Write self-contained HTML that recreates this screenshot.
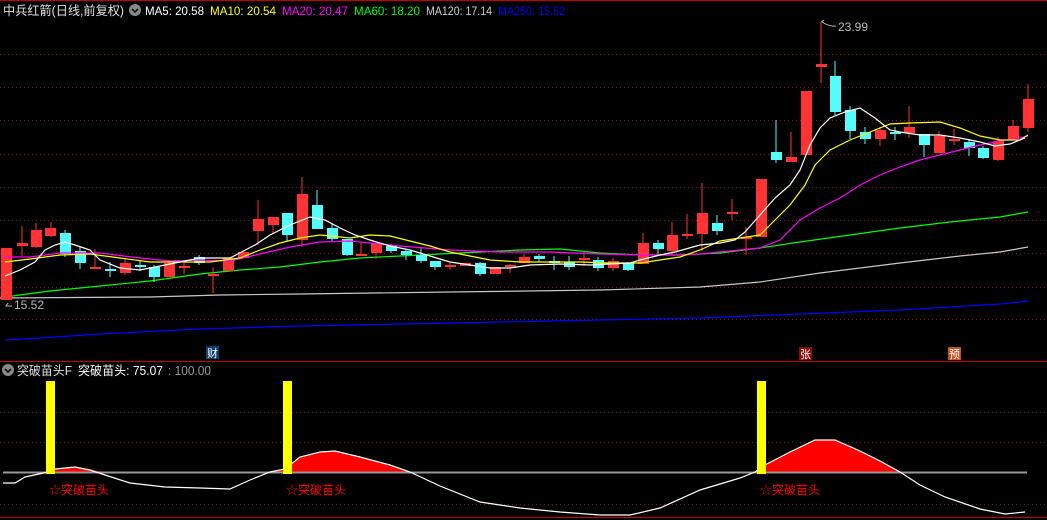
<!DOCTYPE html>
<html><head><meta charset="utf-8"><style>
html,body{margin:0;padding:0;background:#000;width:1047px;height:520px;overflow:hidden}
svg{display:block}
text{font-family:"Liberation Sans","Noto Sans CJK SC",sans-serif}
</style></head><body>
<svg width="1047" height="520" viewBox="0 0 1047 520" xmlns="http://www.w3.org/2000/svg">
<rect width="1047" height="520" fill="#000"/>
<line x1="0" y1="0.5" x2="1047" y2="0.5" stroke="#c00000"/>
<g stroke="#8a1010" stroke-dasharray="1,3">
<line x1="0" y1="54.5" x2="1047" y2="54.5"/><line x1="0" y1="87.5" x2="1047" y2="87.5"/>
<line x1="0" y1="120.5" x2="1047" y2="120.5"/><line x1="0" y1="154.5" x2="1047" y2="154.5"/>
<line x1="0" y1="187.5" x2="1047" y2="187.5"/><line x1="0" y1="220.5" x2="1047" y2="220.5"/>
<line x1="0" y1="253.5" x2="1047" y2="253.5"/><line x1="0" y1="287.5" x2="1047" y2="287.5"/>
<line x1="0" y1="319.5" x2="1047" y2="319.5"/>
<line x1="0" y1="412.5" x2="1047" y2="412.5"/><line x1="0" y1="442.5" x2="1047" y2="442.5"/>
<line x1="0" y1="504.5" x2="1047" y2="504.5"/>
</g>
<text x="3" y="15" font-size="12.5" fill="#e0e0e0" textLength="121" lengthAdjust="spacingAndGlyphs">中兵红箭(日线,前复权)</text>
<circle cx="135" cy="10" r="6" fill="#888"/><path d="M132 9 L135 12 L138 9" stroke="#000" stroke-width="1.5" fill="none"/>
<text x="145" y="15" font-size="12" fill="#fff" textLength="59" lengthAdjust="spacingAndGlyphs">MA5: 20.58</text>
<text x="210" y="15" font-size="12" fill="#ffff00" textLength="66" lengthAdjust="spacingAndGlyphs">MA10: 20.54</text>
<text x="282" y="15" font-size="12" fill="#ff00ff" textLength="66" lengthAdjust="spacingAndGlyphs">MA20: 20.47</text>
<text x="354" y="15" font-size="12" fill="#00ff00" textLength="66" lengthAdjust="spacingAndGlyphs">MA60: 18.20</text>
<text x="426" y="15" font-size="12" fill="#d0d0d0" textLength="66" lengthAdjust="spacingAndGlyphs">MA120: 17.14</text>
<text x="498" y="15" font-size="12" fill="#0000ff" textLength="67" lengthAdjust="spacingAndGlyphs">MA250: 15.52</text>

<g fill="none" stroke-width="1.2">
<polyline stroke="#0000ff" points="5,340 40,338 100,334 200,329 300,326 400,324 500,322 600,320 700,318 800,314 900,310 1000,304 1028,301"/>
<polyline stroke="#c8c8c8" points="0,298 150,297 220,295 300,294 450,292 600,290 700,287 760,282 820,273 900,263 960,256 1000,252 1028,247"/>
<polyline stroke="#00ff00" points="5,297 50,291 100,286 150,281 200,274 240,270 280,267 320,262 360,258 400,256 440,254 480,252 520,250 560,249 600,253 640,255 680,255 720,253 760,248 800,242 850,235 900,228 950,222 1000,217 1028,212"/>
</g>

<g id="c">
<g fill="#ff3333" stroke="#ff3333">
<rect x="1" y="248" width="11" height="52" stroke="none"/>
<line x1="22" y1="226" x2="22" y2="256"/><rect x="17" y="243" width="11" height="3" stroke="none"/>
<line x1="36" y1="223" x2="36" y2="248"/><rect x="31" y="230" width="11" height="17" stroke="none"/>
<line x1="51" y1="222" x2="51" y2="237"/><rect x="45" y="228" width="11" height="8" stroke="none"/>
<line x1="95" y1="249" x2="95" y2="269"/><rect x="90" y="267" width="11" height="2" stroke="none"/>
<line x1="125" y1="258" x2="125" y2="275"/><rect x="120" y="263" width="11" height="10" stroke="none"/>
<line x1="169" y1="260" x2="169" y2="277"/><rect x="164" y="263" width="11" height="14" stroke="none"/>
<line x1="184" y1="262" x2="184" y2="274"/><rect x="179" y="266" width="11" height="2" stroke="none"/>
<line x1="213" y1="267" x2="213" y2="293"/><rect x="208" y="274" width="11" height="2" stroke="none"/>
<rect x="223" y="258" width="11" height="13" stroke="none"/>
<line x1="243" y1="250" x2="243" y2="258"/><rect x="238" y="252" width="11" height="6" stroke="none"/>
<line x1="258" y1="200" x2="258" y2="245"/><rect x="253" y="219" width="11" height="12" stroke="none"/>
<line x1="273" y1="217" x2="273" y2="233"/><rect x="268" y="217" width="11" height="8" stroke="none"/>
<line x1="302" y1="177" x2="302" y2="247"/><rect x="297" y="194" width="11" height="46" stroke="none"/>
<line x1="361" y1="242" x2="361" y2="256"/><rect x="356" y="254" width="11" height="2" stroke="none"/>
<line x1="376" y1="241" x2="376" y2="259"/><rect x="371" y="243" width="11" height="10" stroke="none"/>
<line x1="450" y1="263" x2="450" y2="270"/><rect x="445" y="265" width="11" height="2" stroke="none"/>
<rect x="460" y="263" width="11" height="3" stroke="none"/>
<rect x="490" y="267" width="11" height="7" stroke="none"/>
<line x1="510" y1="264" x2="510" y2="273"/><rect x="505" y="265" width="11" height="2" stroke="none"/>
<line x1="524" y1="254" x2="524" y2="263"/><rect x="519" y="257" width="11" height="6" stroke="none"/>
<line x1="584" y1="252" x2="584" y2="266"/><rect x="579" y="258" width="11" height="2" stroke="none"/>
<line x1="613" y1="258" x2="613" y2="271"/><rect x="608" y="261" width="11" height="7" stroke="none"/>
<line x1="643" y1="233" x2="643" y2="264"/><rect x="638" y="243" width="11" height="21" stroke="none"/>
<line x1="672" y1="222" x2="672" y2="255"/><rect x="667" y="235" width="11" height="16" stroke="none"/>
<line x1="687" y1="214" x2="687" y2="239"/><rect x="682" y="234" width="11" height="2" stroke="none"/>
<line x1="702" y1="183" x2="702" y2="251"/><rect x="697" y="213" width="11" height="21" stroke="none"/>
<line x1="732" y1="199" x2="732" y2="220"/><rect x="727" y="212" width="11" height="2" stroke="none"/>
<line x1="746" y1="227" x2="746" y2="255"/><rect x="741" y="237" width="11" height="2" stroke="none"/>
<rect x="756" y="179" width="11" height="58" stroke="none"/>
<line x1="791" y1="132" x2="791" y2="162"/><rect x="786" y="157" width="11" height="5" stroke="none"/>
<rect x="801" y="91" width="11" height="64" stroke="none"/>
<line x1="821" y1="22" x2="821" y2="83"/><rect x="816" y="64" width="11" height="3" stroke="none"/>
<line x1="880" y1="127" x2="880" y2="146"/><rect x="875" y="130" width="11" height="9" stroke="none"/>
<line x1="909" y1="106" x2="909" y2="138"/><rect x="904" y="127" width="11" height="6" stroke="none"/>
<line x1="939" y1="131" x2="939" y2="153"/><rect x="934" y="136" width="11" height="17" stroke="none"/>
<line x1="954" y1="129" x2="954" y2="145"/><rect x="949" y="139" width="11" height="2" stroke="none"/>
<line x1="998" y1="137" x2="998" y2="161"/><rect x="993" y="141" width="11" height="19" stroke="none"/>
<line x1="1013" y1="120" x2="1013" y2="139"/><rect x="1008" y="126" width="11" height="13" stroke="none"/>
<line x1="1028" y1="84" x2="1028" y2="132"/><rect x="1023" y="99" width="11" height="29" stroke="none"/>
</g>
<g fill="#55fcfc" stroke="#55fcfc">
<line x1="65" y1="230" x2="65" y2="257"/><rect x="60" y="233" width="11" height="21" stroke="none"/>
<line x1="80" y1="247" x2="80" y2="269"/><rect x="75" y="251" width="11" height="12" stroke="none"/>
<line x1="110" y1="262" x2="110" y2="277"/><rect x="105" y="269" width="11" height="2" stroke="none"/>
<line x1="140" y1="261" x2="140" y2="271"/><rect x="135" y="265" width="11" height="2" stroke="none"/>
<line x1="154" y1="265" x2="154" y2="282"/><rect x="149" y="267" width="11" height="10" stroke="none"/>
<line x1="199" y1="255" x2="199" y2="265"/><rect x="194" y="257" width="11" height="6" stroke="none"/>
<line x1="287" y1="213" x2="287" y2="241"/><rect x="282" y="213" width="11" height="22" stroke="none"/>
<line x1="317" y1="190" x2="317" y2="229"/><rect x="312" y="205" width="11" height="24" stroke="none"/>
<line x1="332" y1="223" x2="332" y2="242"/><rect x="327" y="228" width="11" height="11" stroke="none"/>
<line x1="347" y1="239" x2="347" y2="256"/><rect x="342" y="239" width="11" height="16" stroke="none"/>
<line x1="391" y1="244" x2="391" y2="253"/><rect x="386" y="246" width="11" height="5" stroke="none"/>
<line x1="406" y1="250" x2="406" y2="260"/><rect x="401" y="251" width="11" height="4" stroke="none"/>
<line x1="421" y1="248" x2="421" y2="263"/><rect x="416" y="255" width="11" height="6" stroke="none"/>
<line x1="435" y1="261" x2="435" y2="270"/><rect x="430" y="261" width="11" height="6" stroke="none"/>
<line x1="480" y1="262" x2="480" y2="276"/><rect x="475" y="263" width="11" height="11" stroke="none"/>
<line x1="539" y1="254" x2="539" y2="262"/><rect x="534" y="256" width="11" height="3" stroke="none"/>
<line x1="554" y1="256" x2="554" y2="270"/><rect x="549" y="261" width="11" height="2" stroke="none"/>
<line x1="569" y1="256" x2="569" y2="270"/><rect x="564" y="262" width="11" height="5" stroke="none"/>
<line x1="598" y1="257" x2="598" y2="271"/><rect x="593" y="260" width="11" height="8" stroke="none"/>
<line x1="628" y1="262" x2="628" y2="271"/><rect x="623" y="263" width="11" height="7" stroke="none"/>
<line x1="658" y1="240" x2="658" y2="255"/><rect x="653" y="243" width="11" height="6" stroke="none"/>
<line x1="717" y1="215" x2="717" y2="235"/><rect x="712" y="223" width="11" height="8" stroke="none"/>
<line x1="776" y1="120" x2="776" y2="163"/><rect x="771" y="152" width="11" height="8" stroke="none"/>
<line x1="835" y1="61" x2="835" y2="115"/><rect x="830" y="76" width="11" height="36" stroke="none"/>
<line x1="850" y1="106" x2="850" y2="139"/><rect x="845" y="110" width="11" height="21" stroke="none"/>
<line x1="865" y1="127" x2="865" y2="144"/><rect x="860" y="132" width="11" height="7" stroke="none"/>
<line x1="895" y1="127" x2="895" y2="140"/><rect x="890" y="132" width="11" height="2" stroke="none"/>
<line x1="924" y1="134" x2="924" y2="157"/><rect x="919" y="134" width="11" height="11" stroke="none"/>
<line x1="969" y1="139" x2="969" y2="156"/><rect x="964" y="142" width="11" height="6" stroke="none"/>
<line x1="983" y1="146" x2="983" y2="159"/><rect x="978" y="148" width="11" height="10" stroke="none"/>
</g>
</g>

<g fill="none" stroke-width="1.2">
<polyline stroke="#ff00ff" points="5,257 30,257 60,253 100,253 140,258 170,261 200,260 230,261 260,254 290,247 320,242 350,241 400,246 450,250 500,252 550,252 600,254 640,255 680,255 700,254 720,252 740,250 760,248 780,240 800,220 820,208 840,198 860,185 880,175 900,167 920,160 940,155 960,150 980,145 1000,141 1020,138 1028,136"/>
<polyline stroke="#ffff00" points="5,262 30,259 60,255 90,254 120,258 150,262 180,262 210,262 240,258 260,250 280,243 300,238 320,235 350,238 370,235 390,236 410,241 430,246 450,252 470,256 490,260 520,262 550,262 580,262 610,263 640,263 660,260 680,257 700,250 720,241 740,238 760,235 775,220 790,205 805,185 815,165 830,150 850,140 870,132 890,124 910,123 940,122 960,128 980,136 1000,140 1020,140 1028,135"/>
<polyline stroke="#ffffff" points="5,276 20,270 35,262 45,250 55,245 65,242 75,245 90,250 100,260 120,268 140,270 160,266 180,262 200,258 230,258 255,245 270,235 290,225 310,217 325,220 340,228 355,235 370,240 390,246 410,250 430,256 450,262 470,265 490,268 510,268 530,265 560,264 590,265 610,264 630,263 640,260 660,255 675,252 700,245 720,243 735,240 745,232 760,215 775,198 790,185 800,170 810,145 820,128 830,118 845,112 860,108 875,118 890,130 900,132 920,135 940,135 960,138 980,142 995,146 1010,144 1025,138"/>
</g>

<path d="M8 303 L6 306 L12 306" stroke="#bbb" fill="none"/>
<text x="14" y="309" font-size="12" fill="#bbb">15.52</text>
<path d="M821 22 L824 20 M822 22 Q830 27 836 26" stroke="#bbb" fill="none"/>
<text x="838" y="31" font-size="12" fill="#bbb">23.99</text>

<rect x="206" y="346" width="13" height="13" fill="#0a3a6e"/>
<text x="207" y="357" font-size="11" fill="#fff">财</text>
<rect x="799" y="347" width="13" height="13" fill="#8b0a0a"/>
<text x="800" y="358" font-size="11" fill="#fff">张</text>
<rect x="948" y="347" width="13" height="13" fill="#c8501e"/>
<text x="949" y="358" font-size="11" fill="#fff">预</text>

<line x1="0" y1="361.5" x2="1047" y2="361.5" stroke="#c00000"/>
<circle cx="8" cy="370" r="6" fill="#888"/><path d="M5 369 L8 372 L11 369" stroke="#000" stroke-width="1.5" fill="none"/>
<text x="17" y="375" font-size="12.5" fill="#e0e0e0" textLength="55" lengthAdjust="spacingAndGlyphs">突破苗头F</text>
<text x="78" y="375" font-size="12.5" fill="#fff" textLength="85" lengthAdjust="spacingAndGlyphs">突破苗头: 75.07</text>
<text x="168" y="375" font-size="12.5" fill="#999" textLength="43" lengthAdjust="spacingAndGlyphs">: 100.00</text>

<g fill="#ff0000">
<path d="M48 472 L55 469 L75 467 L90 470 L105 472 Z"/>
<path d="M273 472 L285 469 L300 457 L320 452 L335 451 L360 457 L390 465 L408 472 Z"/>
<path d="M755 472 L765 465 L790 452 L815 440 L835 440 L860 451 L880 461 L900 472 Z"/>
</g>
<line x1="3" y1="472.5" x2="1027" y2="472.5" stroke="#999" stroke-width="2"/>
<polyline fill="none" stroke="#fff" stroke-width="1.2" points="3,483 15,483 25,477 48,472 55,469 75,467 90,470 105,475 130,483 165,487 200,488 230,489 250,480 270,472 285,469 300,457 320,452 335,451 360,457 390,465 410,472 440,486 480,502 520,508 560,512 600,515 630,515 660,508 700,490 740,478 755,472 765,465 790,452 815,440 835,440 860,451 880,461 900,472 920,485 945,497 980,509 1005,514 1025,512"/>
<g fill="#ffff00">
<rect x="46" y="381" width="9" height="93"/>
<rect x="283" y="381" width="9" height="93"/>
<rect x="757" y="381" width="9" height="93"/>
</g>
<g font-size="12" fill="#ff0000">
<text x="49" y="494">☆突破苗头</text>
<text x="286" y="494">☆突破苗头</text>
<text x="760" y="494">☆突破苗头</text>
</g>
<line x1="0" y1="517.5" x2="1047" y2="517.5" stroke="#c00000"/>
</svg>
</body></html>
